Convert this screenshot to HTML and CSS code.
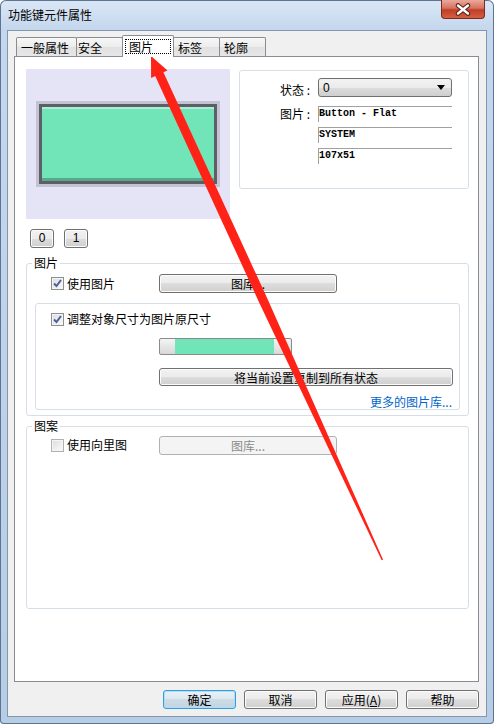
FILE: index.html
```html
<!DOCTYPE html>
<html>
<head>
  <meta charset="utf-8">
  <link rel="stylesheet" href="styles.css">
</head>
<body>
  <div class="window">
    <div class="titlebar">
      <span class="title">功能键元件属性</span>
      <div class="close-btn">
        <svg width="44" height="19" viewBox="0 0 44 19">
          <path d="M17 5.5 L27 13.5 M27 5.5 L17 13.5" stroke="#5a2118" stroke-width="4.6" stroke-linecap="round"/>
          <path d="M17 5.5 L27 13.5 M27 5.5 L17 13.5" stroke="#ffffff" stroke-width="2.4" stroke-linecap="round"/>
        </svg>
      </div>
    </div>

    <div class="client">
      <div class="tabs">
        <div class="tab tab-general">一般属性</div>
        <div class="tab tab-safe">安全</div>
        <div class="tab active"><span class="focus">图片</span></div>
        <div class="tab">标签</div>
        <div class="tab">轮廓</div>
      </div>

      <div class="panel">
        <div class="top-row">
          <div class="preview">
            <div class="preview-rim"><div class="preview-face"></div></div>
          </div>
          <div class="info-box">
            <div class="info-label">状态 :</div>
            <div class="combo">
              <span>0</span>
              <svg width="8" height="5" viewBox="0 0 8 5"><path d="M0 0 H8 L4 5 Z" fill="#000"/></svg>
            </div>
            <div class="info-label">图片 :</div>
            <div class="field">Button - Flat</div>
            <div></div>
            <div class="field">SYSTEM</div>
            <div></div>
            <div class="field">107x51</div>
          </div>
        </div>

        <div class="state-buttons">
          <button class="btn btn-small">0</button>
          <button class="btn btn-small">1</button>
        </div>

        <fieldset class="group">
          <legend>图片</legend>
          <div class="check-row">
            <label class="check">
              <span class="box checked">
                <svg width="11" height="11" viewBox="0 0 11 11"><path d="M2 5.5 L4.5 8 L9 2" fill="none" stroke="#4b5f9e" stroke-width="2"/></svg>
              </span>
              使用图片
            </label>
            <button class="btn btn-lib">图库...</button>
          </div>

          <div class="inner-box">
            <label class="check check-wide">
              <span class="box checked">
                <svg width="11" height="11" viewBox="0 0 11 11"><path d="M2 5.5 L4.5 8 L9 2" fill="none" stroke="#4b5f9e" stroke-width="2"/></svg>
              </span>
              调整对象尺寸为图片原尺寸
            </label>
            <div class="slider"><div class="slider-fill"></div></div>
            <button class="btn btn-copy">将当前设置复制到所有状态</button>
            <div class="more-link">更多的图片库...</div>
          </div>
        </fieldset>

        <fieldset class="group group-pattern">
          <legend>图案</legend>
          <div class="group-body">
            <div class="check-row check-row-pattern">
              <label class="check">
                <span class="box"></span>
                使用向里图
              </label>
              <button class="btn btn-lib disabled">图库...</button>
            </div>
          </div>
        </fieldset>
      </div>

      <div class="dialog-buttons">
        <button class="btn btn-dialog btn-default">确定</button>
        <button class="btn btn-dialog">取消</button>
        <button class="btn btn-dialog">应用(<u>A</u>)</button>
        <button class="btn btn-dialog">帮助</button>
      </div>
    </div>

    <svg class="arrow" width="494" height="724" viewBox="0 0 494 724">
      <polygon fill="#ff2216" points="151,56 167.5,70.4 163.4,72.3 267.1,298.1 383.1,559.7 381.7,560.3 258.9,301.9 155.2,76.1 151.1,78 151,56"/>
    </svg>
  </div>
</body>
</html>
```

FILE: styles.css
```css
* {
  box-sizing: border-box;
}

body {
  margin: 0;
  font-family: "Noto Sans CJK SC", "Liberation Sans", sans-serif;
  font-size: 12px;
  color: #000;
  background: #fff;
}

.window {
  position: relative;
  width: 494px;
  height: 724px;
  background: linear-gradient(#dbe7f5, #c4d7ee 30px, #b7cde6);
  border-radius: 6px 6px 4px 4px;
  box-shadow: inset 0 0 0 1px #5b7592;
  overflow: hidden;
}

.titlebar {
  display: flex;
  align-items: flex-start;
  height: 30px;
  padding: 0 9px 0 8px;
}

.title {
  margin-top: 8px;
  line-height: 14px;
}

.close-btn {
  margin-left: auto;
  width: 44px;
  height: 19px;
  border: 1px solid #7a2a20;
  border-top: none;
  border-radius: 0 0 4px 4px;
  background: linear-gradient(#eaa99b, #d6725f 45%, #c13d28 55%, #d3603f);
}

.close-btn svg {
  display: block;
  margin-left: -1px;
}

.client {
  margin: 0 7px;
  height: 687px;
  background: #f0f0f0;
  border: 1px solid #8496ab;
  padding: 4px 7px 7px 6px;
}

/* tabs */
.tabs {
  display: flex;
  align-items: flex-end;
  height: 21px;
  padding-left: 2px;
}

.tab {
  width: 47px;
  height: 19px;
  margin-right: -1px;
  padding: 2px 0 0 4px;
  line-height: 16px;
  border: 1px solid #898c95;
  border-bottom: none;
  border-radius: 2px 2px 0 0;
  background: linear-gradient(#f7f7f7, #ececec 50%, #e1e1e1 50%, #e6e6e6);
}

.tab-general {
  width: 61px;
}

.tab-safe {
  padding-left: 1px;
}

.tab.active {
  position: relative;
  z-index: 1;
  width: 52px;
  height: 22px;
  margin-bottom: -1px;
  padding: 3px 0 0 2px;
  background: #fff;
}

.focus {
  display: block;
  width: 46px;
  height: 15px;
  padding-left: 3px;
  line-height: 13px;
  border: 1px dotted #000;
}

/* panel */
.panel {
  height: 626px;
  background: #fff;
  border: 1px solid #898c95;
  padding: 12px 9px 0 11px;
}

.top-row {
  display: flex;
  align-items: flex-start;
  gap: 9px;
}

.preview {
  width: 204px;
  height: 150px;
  background: #e4e4f6;
  display: flex;
  align-items: center;
  justify-content: center;
}

.preview-rim {
  width: 184px;
  height: 86px;
  border: 3px solid #c3c3d3;
}

.preview-face {
  height: 100%;
  border: 3px solid #5e5e66;
  background: #72e5b8;
  box-shadow: inset 0 2px 0 #a9efd3, inset 0 -3px 0 #56a98a;
}

.info-box {
  width: 230px;
  height: 119px;
  margin-top: 1px;
  padding-top: 7px;
  border: 1px solid #d5dfe5;
  border-radius: 3px;
  display: grid;
  grid-template-columns: 78px 134px;
  row-gap: 5px;
  align-content: start;
}

.info-label {
  align-self: center;
  text-align: right;
  padding-right: 8px;
  line-height: 16px;
}

.combo {
  height: 19px;
  margin-bottom: 4px;
  padding: 0 6px 0 4px;
  display: flex;
  align-items: center;
  justify-content: space-between;
  border: 1px solid #707070;
  border-radius: 3px;
  background: linear-gradient(#f2f2f2, #ebebeb 50%, #dddddd 50%, #cfcfcf);
  font-family: "Liberation Sans", sans-serif;
}

.field {
  height: 16px;
  border-top: 1px solid #a0a0a0;
  border-left: 1px solid #a0a0a0;
  font-family: "Liberation Mono", monospace;
  font-size: 10px;
  font-weight: bold;
  line-height: 14px;
}

/* buttons */
.btn {
  height: 19px;
  padding: 0;
  font: inherit;
  line-height: 15px;
  color: #000;
  border: 1px solid #707070;
  border-radius: 3px;
  background: linear-gradient(#f2f2f2, #ebebeb 50%, #dddddd 50%, #cfcfcf);
  box-shadow: inset 0 0 0 1px #fcfcfc;
}

.btn-small {
  width: 24px;
  font-family: "Liberation Sans", sans-serif;
}

.btn-lib {
  width: 178px;
}

.btn.disabled {
  color: #8b8b8b;
  border-color: #adb2b5;
  background: #f4f4f4;
  box-shadow: none;
}

.btn-copy {
  display: block;
  width: 294px;
  height: 18px;
  margin: 13px 0 0 108px;
}

.state-buttons {
  display: flex;
  gap: 10px;
  margin-top: 10px;
  padding-left: 4px;
}

/* groups */
.group {
  min-width: 0;
  margin: 8px 0 0;
  padding: 0;
  border: 1px solid #d5dfe5;
  border-radius: 3px;
}

.group legend {
  margin-left: 5px;
  padding: 0 2px;
  line-height: 14px;
}

.check-row {
  display: flex;
  align-items: center;
  height: 19px;
  margin-top: 4px;
  padding-left: 24px;
}

.check {
  width: 108px;
  display: flex;
  align-items: center;
  gap: 3px;
  line-height: 16px;
}

.check-wide {
  width: auto;
}

.box {
  width: 13px;
  height: 13px;
  flex: none;
  display: flex;
  align-items: center;
  justify-content: center;
  border: 1px solid #8e8f8f;
  background: linear-gradient(135deg, #dcdcdc, #fbfbfb);
  box-shadow: inset 0 0 0 1px #f4f4f4;
}

.inner-box {
  height: 107px;
  margin: 10px 8px 5px;
  padding: 7px 7px 0 15px;
  border: 1px solid #d5dfe5;
  border-radius: 3px;
}

.slider {
  width: 133px;
  height: 17px;
  margin: 11px 0 0 108px;
  padding-left: 15px;
  border: 1px solid #8b8b8b;
  border-radius: 2px;
  background: linear-gradient(#f4f4f4, #d8d8d8);
}

.slider-fill {
  width: 99px;
  height: 100%;
  background: #72e5b8;
}

.more-link {
  margin-top: 9px;
  text-align: right;
  line-height: 14px;
  color: #0066cc;
}

.group-pattern {
  margin-top: 3px;
}

.group-body {
  height: 172px;
}

.check-row-pattern {
  height: 18px;
  margin-top: 3px;
}

.group-pattern .box {
  border-color: #b1b1b1;
}

/* dialog buttons */
.dialog-buttons {
  display: flex;
  justify-content: flex-end;
  gap: 8px;
  margin-top: 8px;
}

.btn-dialog {
  width: 73px;
}

.btn-default {
  border-color: #3c9ad6;
  background: linear-gradient(#eaf1f6, #dce7ef 50%, #cddbe6 50%, #c4d4e0);
  box-shadow: inset 0 0 0 1px #a6e0fb;
}

.arrow {
  position: absolute;
  top: 0;
  left: 0;
  pointer-events: none;
}
```
